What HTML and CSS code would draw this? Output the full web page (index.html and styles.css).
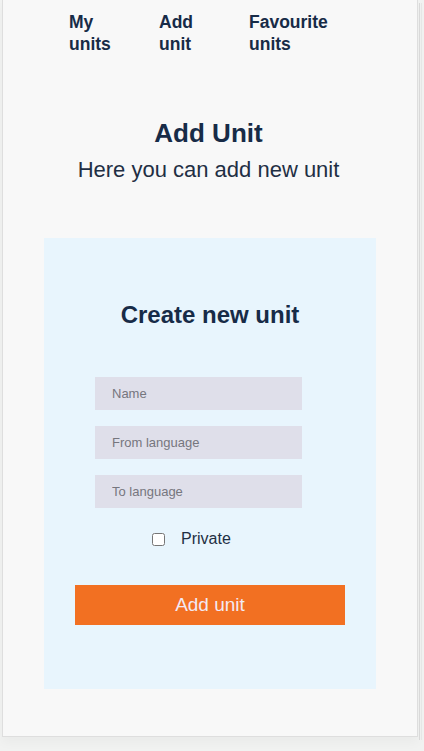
FILE: index.html
```html
<!DOCTYPE html>
<html lang="en">
<head>
<meta charset="utf-8">
<title>Add Unit</title>
<link rel="stylesheet" href="styles.css">
</head>
<body>
<div class="page">
  <div class="frame">
    <nav class="nav">
      <a class="nav-link" href="#">My units</a>
      <a class="nav-link" href="#">Add unit</a>
      <a class="nav-link" href="#">Favourite units</a>
    </nav>
    <header class="intro">
      <h1 class="title">Add Unit</h1>
      <p class="subtitle">Here you can add new unit</p>
    </header>
    <section class="card">
      <h2 class="card-title">Create new unit</h2>
      <form class="form">
        <input class="field" type="text" placeholder="Name">
        <input class="field" type="text" placeholder="From language">
        <input class="field" type="text" placeholder="To language">
        <label class="check-row"><input class="check" type="checkbox"><span class="check-label">Private</span></label>
        <button class="submit" type="button">Add unit</button>
      </form>
    </section>
  </div>
  <div class="sliver"></div>
</div>
</body>
</html>
```

FILE: styles.css
```css
html, body {
  margin: 0;
  padding: 0;
}
body {
  background: #f1f2f1;
  font-family: "Liberation Sans", Arial, sans-serif;
  color: #172b47;
  width: 424px;
  height: 751px;
  overflow: hidden;
}
.page {
  display: flex;
  align-items: flex-start;
}
.frame {
  box-sizing: border-box;
  margin-left: 2px;
  width: 416px;
  height: 737px;
  background: #f8f8f8;
  border: 1px solid #dedede;
  border-top: none;
  box-shadow: 0 6px 10px rgba(0,0,0,0.03);
}
.sliver {
  margin-left: 1px;
  margin-top: 3px;
  width: 1px;
  height: 737px;
  border-left: 1px solid #d9d9d9;
  border-right: 1px solid #e6e6e6;
}
.nav {
  display: grid;
  grid-template-columns: 90px 90px 90px;
  align-items: start;
  padding: 11px 0 0 66px;
}
.nav-link {
  width: min-content;
  font-size: 17.5px;
  font-weight: bold;
  line-height: 22px;
  color: #172b47;
  text-decoration: none;
}
.intro {
  text-align: center;
  margin-top: 63px;
  padding-right: 3px;
}
.title {
  margin: 0;
  font-size: 26px;
  line-height: 30px;
  font-weight: bold;
}
.subtitle {
  margin: 9px 0 0;
  font-size: 22px;
  line-height: 26px;
  color: #1f2f44;
}
.card {
  box-sizing: border-box;
  margin: 55px 0 0 41px;
  width: 332px;
  height: 451px;
  background: #e8f5fd;
  padding: 63px 31px 0;
}
.card-title {
  margin: 0;
  text-align: center;
  font-size: 24px;
  line-height: 28px;
  font-weight: bold;
}
.form {
  display: flex;
  flex-direction: column;
  margin-top: 48px;
}
.field {
  box-sizing: border-box;
  margin-left: 20px;
  width: 207px;
  height: 33px;
  border: none;
  outline: none;
  background: #dfdfea;
  padding: 0 17px;
  font-family: "Liberation Sans", Arial, sans-serif;
  font-size: 13px;
  color: #333;
}
.field + .field {
  margin-top: 16px;
}
.field::placeholder {
  color: #76767e;
}
.check-row {
  display: flex;
  align-items: center;
  margin-top: 21px;
  padding-left: 73px;
  height: 20px;
  font-size: 16px;
  color: #1f2f44;
}
.check {
  margin: 0 16px 0 4px;
  width: 13px;
  height: 13px;
}
.submit {
  margin-top: 36px;
  width: 270px;
  height: 40px;
  border: none;
  background: #f27022;
  color: #f3e9f3;
  font-family: "Liberation Sans", Arial, sans-serif;
  font-size: 19px;
  padding: 0;
}
```
